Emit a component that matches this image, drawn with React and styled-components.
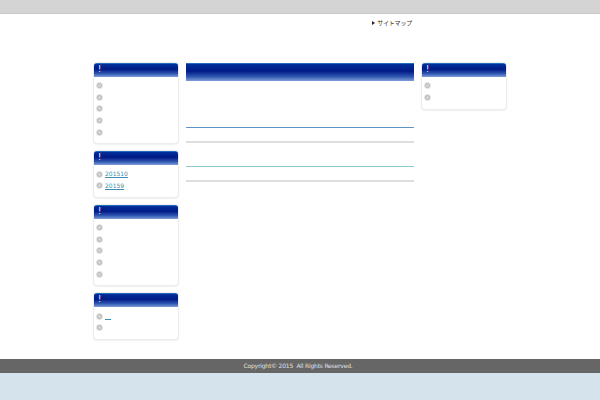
import styled, { createGlobalStyle } from "styled-components";

const Global = createGlobalStyle`
  html, body {
    margin: 0;
    padding: 0;
    background: #d5e3ec;
    font-family: "DejaVu Sans", Verdana, "Noto Sans CJK JP", sans-serif;
  }
`;

const Page = styled.div`
  background: #ffffff;
`;

const TopBar = styled.div`
  height: 13px;
  background: #d4d4d4;
  border-bottom: 1px solid #c9c9c9;
`;

const Header = styled.div`
  width: 412px;
  margin: 0 auto;
  height: 49px;
`;

const SiteNav = styled.div`
  width: 318px;
  padding-top: 4px;
  text-align: right;
  font-size: 6px;
  letter-spacing: -0.2px;
  line-height: 10px;
  color: #333;
  font-family: "Noto Sans CJK JP", "DejaVu Sans", sans-serif;
  &::before {
    content: "";
    display: inline-block;
    border-left: 3px solid #222;
    border-top: 2.5px solid transparent;
    border-bottom: 2.5px solid transparent;
    margin-right: 2px;
    vertical-align: 0;
  }
`;

const Columns = styled.div`
  width: 412px;
  margin: 0 auto;
  display: grid;
  grid-template-columns: 84px 228px 84px;
  column-gap: 8px;
  align-items: start;
  padding-bottom: 20px;
`;

const Side = styled.div`
  display: flex;
  flex-direction: column;
  gap: 8px;
`;

const Widget = styled.div`
  background: #fff;
  border-radius: 3px;
  box-shadow: 0 0 0 1px #ececec, 0 1px 2px #cfcfcf;
  overflow: hidden;
  padding-bottom: 5.4px;
`;

const BarHead = styled.div`
  height: ${(p) => p.$h || 14}px;
  background: linear-gradient(
    to bottom,
    #4aa6e0 0px,
    #00309a 1px,
    #001a86 45%,
    #2f55b0 75%,
    #7f9fd8 100%
  );
  color: #fff;
  font-size: 8px;
  line-height: 14px;
  padding-left: 4px;
`;

const List = styled.ul`
  list-style: none;
  margin: 0;
  padding: 3px 0 0 2px;
`;

const Item = styled.li`
  height: 11.6px;
  font-size: 6px;
  line-height: 11.6px;
  display: flex;
  align-items: center;
  gap: 2px;
  &::before {
    content: "";
    width: 3px;
    height: 3px;
    border-radius: 50%;
    border: 1px solid #b4b4b4;
    box-shadow: 0 0 0 1px #e6e6e6;
    background: #d8d8d8;
    margin-left: 1px;
    margin-right: 1px;
    flex: none;
  }
`;

const Link = styled.a`
  color: #3b8fb4;
  text-decoration: underline;
`;

const Main = styled.div`
  display: flex;
  flex-direction: column;
`;

const Post = styled.div`
  height: ${(p) => p.$h}px;
  border-bottom: 1px solid ${(p) => p.$line};
`;

const Sep = styled.div`
  height: 13px;
  border-bottom: 2px solid #dedede;
`;

const Footer = styled.div`
  height: 14px;
  background: #666;
  color: #e0e0e0;
  font-size: 6px;
  letter-spacing: -0.2px;
  line-height: 14px;
  text-align: center;
  white-space: pre;
  padding-right: 4px;
  font-family: "DejaVu Sans", sans-serif;
`;

function Box({ count, children }) {
  return (
    <Widget>
      <BarHead>!</BarHead>
      <List>
        {children ||
          Array.from({ length: count }).map((_, i) => <Item key={i} />)}
      </List>
    </Widget>
  );
}

export default function App() {
  return (
    <>
      <Global />
      <Page>
        <TopBar />
        <Header>
          <SiteNav>サイトマップ</SiteNav>
        </Header>
        <Columns>
          <Side>
            <Box count={5} />
            <Box>
              <Item>
                <Link href="#">201510</Link>
              </Item>
              <Item>
                <Link href="#">20159</Link>
              </Item>
            </Box>
            <Box count={5} />
            <Box>
              <Item>
                <Link href="#">__</Link>
              </Item>
              <Item />
            </Box>
          </Side>
          <Main>
            <BarHead $h={18} />
            <Post $h={46} $line="#5f95c4" />
            <Sep />
            <Post $h={23} $line="#8ccad2" />
            <Sep />
          </Main>
          <Side>
            <Box count={2} />
          </Side>
        </Columns>
      </Page>
      <Footer>Copyright© 2015  All Rights Reserved.</Footer>
    </>
  );
}
